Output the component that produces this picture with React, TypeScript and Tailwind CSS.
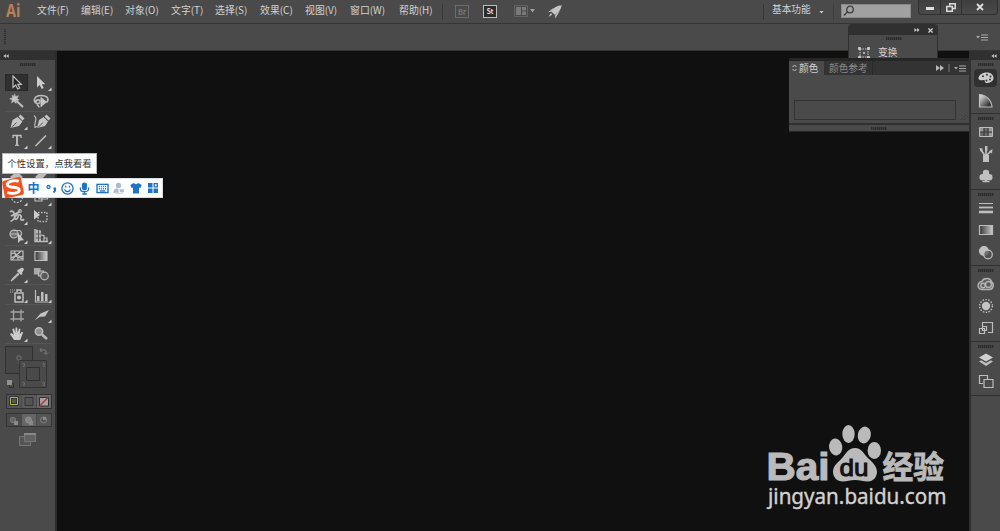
import type { ReactNode } from 'react';

const menus = [
  { label: '文件(F)', width: 'w-[44px]' },
  { label: '编辑(E)', width: 'w-[44px]' },
  { label: '对象(O)', width: 'w-[46px]' },
  { label: '文字(T)', width: 'w-[44px]' },
  { label: '选择(S)', width: 'w-[45px]' },
  { label: '效果(C)', width: 'w-[45px]' },
  { label: '视图(V)', width: 'w-[45px]' },
  { label: '窗口(W)', width: 'w-[49px]' },
  { label: '帮助(H)', width: 'w-[40px]' },
];

interface ToolProps {
  children?: ReactNode;
  more?: boolean;
}

function Tool({ children, more }: ToolProps) {
  return (
    <svg viewBox="0 0 24 19" className="block h-[19px] w-6" fill="none" stroke="#bdbdbd" strokeWidth="1.2">
      {children}
      {more && <path d="M22.5 14.500v3.500H19z" fill="#d0d0d0" stroke="none" />}
    </svg>
  );
}

function Gripper() {
  return (
    <div className="h-[3px] w-4 bg-[repeating-linear-gradient(90deg,#2c2c2c_0px,#2c2c2c_1px,#3c3c3c_1px,#3c3c3c_2px)]" />
  );
}

function DoubleArrow({ left }: { left?: boolean }) {
  return (
    <svg viewBox="0 0 8 6" className={left ? 'h-[4px] w-[6px] rotate-180' : 'h-[6px] w-[8px]'} fill="#b8b8b8">
      <path d="M0 0l4 3-4 3zM4 0l4 3-4 3z" />
    </svg>
  );
}

function PanelMenu({ className }: { className: string }) {
  return (
    <svg viewBox="0 0 12 7" className={`h-[7px] w-3 ${className}`} fill="#a8a8a8">
      <path d="M0 2h4L2 4.5zM5 .5h7v1H5zM5 3h7v1H5zM5 5.5h7v1H5z" />
    </svg>
  );
}

function MenuBar() {
  return (
    <div className="flex h-[23px] shrink-0 items-start">
      <span className="w-[37px] pl-[6px] font-['Open_Sans','Noto_Sans',sans-serif] text-[17.500px] font-bold leading-[20px] text-[#b98058]">
        <span className="inline-block w-[14px] origin-left scale-x-[0.83]">Ai</span>
      </span>
      <div className="flex pt-[2px] text-[9.900px] leading-[17px]">
        {menus.map((menu) => (
          <span key={menu.label} className={`${menu.width} whitespace-nowrap`}>
            {menu.label}
          </span>
        ))}
      </div>
      <div className="ml-[3px] mt-1 h-4 w-px bg-[#383838]" />
      <div className="ml-[12px] mt-[5px] flex h-[13px] w-[14px] items-center justify-center border border-[#6c6c6c] text-[7.500px] text-[#8a8a8a]">
        Br
      </div>
      <div className="ml-[14px] mt-[5px] flex h-[13px] w-[14px] items-center justify-center border border-[#bdbdbd] bg-[#2c2c2c] text-[7px] font-bold text-[#dddddd]">
        St
      </div>
      <svg viewBox="0 0 22 12" className="ml-[17px] mt-[5px] h-3 w-[22px]">
        <path d="M.5.5h13v11H.5z" fill="none" stroke="#646464" />
        <path d="M2 2h5v8H2zM8 2h4v3.5H8zM8 6.5h4V10H8z" fill="#7a7a7a" />
        <path d="M16 4h5l-2.5 3.5z" fill="#a0a0a0" />
      </svg>
      <svg viewBox="0 0 14 14" className="ml-3 mt-[5px] h-[14px] w-[14px]" fill="#c4c4c4">
        <path d="M13.7.2C9.500.5 5.500 2.500 2.700 6l4 3.700c3.600-1.700 6.300-4.700 7-9.500z" />
        <path d="M5.500 2.800L.2 7.200l3-.4zM11.800 6.200l-4.800 7.500.3-4zM2.800 8L.5 12l3.800-2.500z" />
      </svg>
      <div className="ml-[201px] mt-1 h-4 w-px bg-[#383838]" />
      <span className="ml-[8px] w-[47px] pt-[1px] text-[9.700px] leading-[17px]">基本功能</span>
      <svg viewBox="0 0 5 3" className="mt-[11px] h-[2.500px] w-[5px]" fill="#c8c8c8">
        <path d="M0 0h5L2.500 3z" />
      </svg>
      <div className="ml-[9px] mt-1 h-4 w-px bg-[#3e3e3e]" />
      <div className="ml-[7px] mt-[4px] h-[14px] w-[70px] border border-[#898989] bg-[#a1a1a1]">
        <svg viewBox="0 0 12 12" className="ml-[1px] h-3 w-3" fill="none" stroke="#3c3c3c" strokeWidth="1.300">
          <circle cx="7" cy="4.500" r="3.300" />
          <path d="M4.500 7L.8 10.500" />
        </svg>
      </div>
      <div className="ml-[7px] flex h-[15px] w-[80px] divide-x divide-[#303030] rounded-b-sm border border-t-0 border-[#303030] bg-gradient-to-b from-[#3e3e3e] to-[#4a4a4a]">
        <div className="flex w-[22px] items-center justify-center pt-[3px]">
          <div className="h-[3px] w-2 bg-[#dedede]" />
        </div>
        <div className="flex w-[21px] items-center justify-center">
          <svg viewBox="0 0 10 9" className="h-[9px] w-[10px]" fill="none" stroke="#dedede" strokeWidth="1.500">
            <path d="M3.700 2.500V.8h5.500v4.700H6.500M.8 3.500h5.500v4.700H.8z" />
          </svg>
        </div>
        <div className="flex flex-1 items-center justify-center">
          <svg viewBox="0 0 8 8" className="h-2 w-2" stroke="#dedede" strokeWidth="1.800">
            <path d="M1 1l6 6M7 1L1 7" />
          </svg>
        </div>
      </div>
    </div>
  );
}

function Toolbox() {
  return (
    <div className="flex h-full w-[57px] shrink-0 flex-col border-r-2 border-[#2b2b2b] bg-[#4a4a4a]">
      <div className="flex h-[9px] shrink-0 items-center bg-[#303030] pl-[3px]">
        <DoubleArrow left />
      </div>
      <div className="flex h-3 shrink-0 justify-center pt-[3px]">
        <Gripper />
      </div>

      {/* Selection */}
      <div className="ml-[5px] grid w-[47px] grid-cols-[24px_23px] border-b border-[#555555]">
        <div className="h-5 pt-[1px]">
          <Tool>
            <path d="M.5 1.500h22v16H.5z" fill="#303030" stroke="#292929" />
            <path d="M8 3v11.500l2.700-2.500 2 4 2-1-1.900-3.700h3.500z" fill="#252525" />
          </Tool>
        </div>
        <div className="pt-[1px]">
          <Tool more>
            <path d="M8 3v11.500l2.700-2.500 2 4 2-1-1.900-3.700h3.500z" fill="#cccccc" stroke="none" />
          </Tool>
        </div>
        <Tool>
          <path d="M9.500 1.800l1 2.700 3-.8-1.600 2.600 2.200 1.700-3 .4-.1 3.100-2-2.200-2.600 1.600.9-3-2.700-1.200 2.900-.8-.3-2.800 2 1.500z" fill="#c4c4c4" stroke="#c4c4c4" strokeWidth=".5" />
          <path d="M11 8.500l7 6.500" strokeWidth="2.100" />
        </Tool>
        <Tool>
          <path d="M8 11.500C3.500 9.500 5 3.500 12 3.500s8.500 4 5.500 7M7 10c0-2.500 4-3 4-.5s-2.500 2.500-4 1.500M8 12.500c1 1 2 1.500 2 3" strokeWidth="1.600" />
          <path d="M11.500 4.500v11l6.500-5.500z" fill="#c4c4c4" stroke="none" />
        </Tool>
      </div>

      {/* Drawing */}
      <div className="ml-[5px] grid w-[47px] grid-cols-[24px_23px] border-b border-[#555555]">
        <Tool more>
          <path d="M5.500 16l2-8 5-3 5 4.500-3.500 4.500zM13.500 4.500L15.500 2.500l4 4-2 2z" fill="#c4c4c4" stroke="none" />
          <path d="M6.500 15.500l5-5" stroke="#484848" strokeWidth=".9" />
        </Tool>
        <Tool>
          <path d="M8 16l2-8 4.500-3 4.500 4.500-3 4.500zM15.500 4.500l2-2 4 4-2 2z" fill="#c4c4c4" stroke="none" />
          <path d="M5 3.500c5 3-1 8 1 12l2-1" />
          <path d="M9 15.500l5-5" stroke="#484848" strokeWidth=".9" />
        </Tool>
        <Tool more>
          <path d="M8 7V4.500h8V7" strokeWidth="1.300" />
          <path d="M12 4v10" strokeWidth="1.900" />
          <path d="M10 14.300h4" />
        </Tool>
        <Tool more>
          <path d="M6.500 15L17 4.500" strokeWidth="1.600" />
        </Tool>
        <Tool more>
          <circle cx="12" cy="9" r="5" />
        </Tool>
        <Tool more>
          <path d="M7 14L16 4l2 2L9 15z" />
        </Tool>
        <Tool more>
          <path d="M6 8l6-5 5 5-6 6z" fill="#bdbdbd" />
        </Tool>
        <Tool more>
          <path d="M7 8l6-6 5 2-6 6z" fill="#bdbdbd" />
        </Tool>
        <Tool more>
          <circle cx="12" cy="9" r="5.500" strokeDasharray="2 1.300" />
        </Tool>
        <Tool more>
          <path d="M6 6h7v7H6zM10 3h8.500v8H10z" />
        </Tool>
        <Tool more>
          <path d="M5 5c3-3 5 2 4.500 5s3 3 3.500-.5 4-1 3 1.500 2 3 3 1M5.500 14c3 1 5.500-7 9-10M6 9l8-4" strokeWidth="1.700" />
          <circle cx="15" cy="4" r="1.300" />
        </Tool>
        <Tool>
          <path d="M9 5.500h9v9H9z" strokeDasharray="1.500 1.500" strokeWidth="1.500" />
          <path d="M5 3v9.500l6-4.500z" fill="#cccccc" stroke="none" />
        </Tool>
        <Tool more>
          <circle cx="9" cy="8" r="4" fill="#6e6e6e" />
          <path d="M5.500 8h8M8 4.500h6c3 0 3.500 5 0 7" />
          <path d="M13 7v10l2.500-2.500 3.500-.2z" fill="#c8c8c8" stroke="none" />
        </Tool>
        <Tool more>
          <path d="M6 3v12.500h13" strokeWidth="1.500" />
          <path d="M7 3.500l5 1V15H7z" fill="#b4b4b4" stroke="none" />
          <path d="M12 9l3 .5V15M15 12h3v3" />
          <path d="M9.500 4v11M7 8h5M7 12h5" stroke="#4a4a4a" strokeWidth=".8" />
        </Tool>
      </div>

      {/* Colouring */}
      <div className="ml-[5px] grid w-[47px] grid-cols-[24px_23px] border-b border-[#555555]">
        <Tool>
          <path d="M6 5h12v9H6zM6 8c5-4 8 6 12 2M10 5c-2 5 4 4 3 9M16 5c-3 3-6 5-9 9M6 12l4-2 8 3" />
        </Tool>
        <Tool>
          <defs>
            <linearGradient id="toolGradient">
              <stop offset="0" stopColor="#333333" />
              <stop offset="1" stopColor="#d4d4d4" />
            </linearGradient>
          </defs>
          <path d="M6 5.500h12v9H6z" fill="url(#toolGradient)" />
        </Tool>
        <Tool more>
          <path d="M14 4.500l2-1.500c2-1 3.500 1 2.500 2.500L17 7.500l.5 1.500-1.500 1-4-4 1-1.500z" fill="#c8c8c8" stroke="none" />
          <path d="M13.500 8L8 13.500l-2 2.500L8 14.500l6-5.500" />
        </Tool>
        <Tool>
          <path d="M5.500 3.500H11V9H5.500z" fill="#a8a8a8" stroke="#a8a8a8" />
          <path d="M9.500 6h5v5h-5z" fill="#777777" />
          <circle cx="15.500" cy="11" r="3.800" fill="#5a5a5a" />
        </Tool>
      </div>

      {/* Symbols and graphs */}
      <div className="ml-[5px] grid w-[47px] grid-cols-[24px_23px] border-b border-[#555555]">
        <Tool more>
          <path d="M10 8h8v9h-8zM12 7V5h4v2" strokeWidth="1.500" />
          <circle cx="14" cy="12.500" r="1.500" fill="#c8c8c8" />
          <path d="M5 5h6M5 7h4" stroke="#8c8c8c" strokeWidth="1.500" strokeDasharray="1 1" />
        </Tool>
        <Tool more>
          <path d="M6.500 5v12H19" />
          <path d="M8 11h2.500v5H8zM12 7h2.500v9H12zM16 9h2.500v7H16z" fill="#bdbdbd" stroke="none" />
        </Tool>
      </div>

      {/* Artboard and view */}
      <div className="ml-[5px] grid w-[47px] grid-cols-[24px_23px] border-b border-[#555555]">
        <Tool>
          <path d="M8.500 4.500v12M16 4.500v12M5.500 7H19M5.500 14H19" stroke="#a4a4a4" strokeWidth="1.300" />
        </Tool>
        <Tool more>
          <path d="M5.500 15.500l6-7L20 5l-4 6.500-5 .3z" fill="#c4c4c4" stroke="none" />
        </Tool>
        <Tool more>
          <path d="M9 16l-4-6 1.300-1 2.500 2L7.300 5 9 4.500l1.500 4.500V3.500h1.700l.4 5.500L14 4.500l1.400.5-.7 5.500 2-2.800 1.400.8-2.900 7.500z" fill="#cccccc" stroke="none" />
        </Tool>
        <Tool>
          <circle cx="10" cy="7.500" r="3.700" fill="#919191" strokeWidth="1.500" />
          <path d="M13 10.500l5 4.500" strokeWidth="2.500" />
        </Tool>
      </div>

      {/* Fill / stroke, colour mode, drawing mode, screen mode */}
      <svg viewBox="0 0 55 112" className="block h-28 w-[55px] shrink-0" fill="none">
        <path d="M5.500 2.500h27v27h-27z" fill="#464646" stroke="#303030" />
        <circle cx="19" cy="14" r="2.200" stroke="#777777" />
        <path d="M19 17v3" stroke="#4f6475" />
        <path d="M19.500 16.500h27v27h-27z" fill="#4a4a4a" stroke="#343434" />
        <path d="M26.500 23.500h13v13h-13z" stroke="#303030" />
        <g stroke="#7c7c7c">
          <path d="M22.500 20c1-1.500 3 0 1.500 1.200V23M42.500 20c1-1.500 3 0 1.500 1.200V23M22.500 39c1-1.500 3 0 1.500 1.200V42M42.500 39c1-1.500 3 0 1.500 1.200V42" />
          <path d="M40 6h5c1 0 1 1 1 4M41.500 4L40 6l1.500 2M44 8.500l2 2 2-2" />
        </g>
        <path d="M9.500 39.500h4v4h-4z" stroke="#303030" />
        <path d="M7 36h5v5H7z" fill="#919191" />

        <path d="M6.500 50.500h45v14h-45z" stroke="#303030" />
        <path d="M7 51h14v13H7z" fill="#555555" />
        <path d="M10.500 53.500h7v7h-7z" stroke="#2c2c2c" strokeWidth="2.500" />
        <path d="M10.500 53.500h7v7h-7z" stroke="#b5b34d" />
        <path d="M22 51h14v13H22z" fill="#5b5b5b" />
        <path d="M25 53.500h8v8h-8z" fill="#555555" stroke="#333333" />
        <path d="M37 51h14v13H37z" fill="#666666" />
        <path d="M39.500 53.500h9v8.500h-9z" fill="#a3a3a3" stroke="#303030" />
        <path d="M40 61.500l8-8" stroke="#bd3434" strokeWidth="1.500" />

        <path d="M6.500 69.500h45v13h-45z" stroke="#343434" />
        <path d="M22 70h14v12H22z" fill="#656565" />
        <path d="M37 70h14v12H37z" fill="#555555" />
        <circle cx="13" cy="76" r="2.700" fill="#666666" stroke="#7a7a7a" />
        <path d="M14 77h4v4h-4z" fill="#888888" />
        <path d="M29 77h4v4h-4z" fill="#888888" />
        <circle cx="28.500" cy="76" r="3" fill="#858585" stroke="#8d8d8d" />
        <circle cx="43.500" cy="76" r="3" stroke="#818181" />
        <path d="M43 73h3v3h-3z" fill="#888888" />

        <path d="M19.500 92.500h11v9h-11z" fill="#555555" stroke="#777777" />
        <path d="M24.500 89.500h11v8h-11z" fill="#626262" stroke="#777777" />
        <path d="M24 90h12" stroke="#888888" strokeWidth="2" />
      </svg>
    </div>
  );
}

function DockIcon({ children, active }: { children: ReactNode; active?: boolean }) {
  return (
    <div className="flex h-[22px] items-center justify-center">
      <div className={active ? 'flex h-[18px] w-[23px] items-center justify-center rounded-sm bg-[#303030]' : 'flex'}>
        <svg viewBox="0 0 18 18" className="h-[18px] w-[18px]" fill="none" stroke="#bdbdbd" strokeWidth="1.200">
          {children}
        </svg>
      </div>
    </div>
  );
}

function DockGroup({ children }: { children: ReactNode }) {
  return (
    <div className="border-b border-[#303030] pb-[2px]">
      <div className="flex h-[7px] justify-center pt-[3px]">
        <Gripper />
      </div>
      {children}
    </div>
  );
}

function RightDock() {
  return (
    <div className="w-[31px] shrink-0 border-l-2 border-[#303030] bg-[#4a4a4a]">
      <div className="flex h-[9px] items-center justify-end bg-[#303030] pr-[3px]">
        <DoubleArrow left />
      </div>
      <DockGroup>
        <DockIcon active>
          <path d="M9.500 3.500c4 0 7 2 7 5.500s-3.500 5-7 5c-2 0-1-2.500-2.500-3s-5 1.500-5.500-1.500C1.500 6 5.500 3.500 9.500 3.500z" fill="#cccccc" stroke="none" />
          <g fill="#343434" stroke="none">
            <circle cx="6" cy="7.200" r="1" />
            <circle cx="10" cy="5.700" r="1" />
            <circle cx="13.500" cy="7.500" r="1" />
            <circle cx="13" cy="10.500" r="1" />
            <circle cx="9.500" cy="11.500" r="1" />
          </g>
        </DockIcon>
        <DockIcon>
          <defs>
            <linearGradient id="guideGradient" x1="0" y1="0" x2="1" y2="1">
              <stop offset="0" stopColor="#eeeeee" />
              <stop offset=".8" stopColor="#333333" />
            </linearGradient>
          </defs>
          <path d="M2.500 3.500c6 0 12 5.500 12.500 12.500H2.500z" fill="url(#guideGradient)" />
        </DockIcon>
      </DockGroup>
      <DockGroup>
        <DockIcon>
          <path d="M2.500 4.500h13v9h-13z" fill="#6a6a6a" strokeWidth="1" />
          <path d="M3 5h4v4H3zM11 5h4v4h-4zM11 9.500h4V13h-4z" fill="#999999" stroke="none" />
          <path d="M7 5v8M11 5v8M3 9h12" stroke="#393939" />
        </DockIcon>
        <DockIcon>
          <path d="M6 10h6v7H6z" fill="#c0c0c0" stroke="none" />
          <path d="M7.500 10L4 5M9 10V3M10 10l4-4" strokeWidth="1.700" />
          <path d="M2.500 3l3 .5v4L3 5.500zM8 1h2.400v5H8zM12 6.500L15.500 4l-.5 4.500z" fill="#c0c0c0" stroke="none" />
        </DockIcon>
        <DockIcon>
          <g fill="#c0c0c0" stroke="none">
            <circle cx="9" cy="6" r="3.200" />
            <circle cx="5.700" cy="10.300" r="3.200" />
            <circle cx="12.300" cy="10.300" r="3.200" />
            <path d="M8.300 8h1.400l.8 6h2v1.200h-7V14h2z" />
          </g>
        </DockIcon>
      </DockGroup>
      <DockGroup>
        <DockIcon>
          <path d="M2 4.500h14" strokeWidth="1" />
          <path d="M2 8.500h14" strokeWidth="1.800" />
          <path d="M2 13h14" strokeWidth="2.600" />
        </DockIcon>
        <DockIcon>
          <defs>
            <linearGradient id="dockGradient">
              <stop offset="0" stopColor="#333333" />
              <stop offset="1" stopColor="#cccccc" />
            </linearGradient>
          </defs>
          <path d="M2.500 4.500h13v9h-13z" fill="url(#dockGradient)" />
        </DockIcon>
        <DockIcon>
          <circle cx="7" cy="8" r="4.500" fill="#c0c0c0" />
          <circle cx="11" cy="11.500" r="4.300" fill="#555555" fillOpacity=".75" />
        </DockIcon>
      </DockGroup>
      <DockGroup>
        <DockIcon>
          <path d="M5.500 14.500a4 4 0 0 1-.7-8C6.500 2.500 13.500 2.300 14.500 7c2.800 1.300 2.300 7.500-2.500 7.500z" fill="#5c5c5c" stroke="#b4b4b4" strokeWidth="1.500" />
          <circle cx="6" cy="10.500" r="2.200" stroke="#b4b4b4" strokeWidth="1.400" />
          <circle cx="11.500" cy="9.500" r="3" stroke="#b4b4b4" strokeWidth="1.400" />
        </DockIcon>
        <DockIcon>
          <circle cx="9" cy="9" r="4.200" fill="#c4c4c4" stroke="none" />
          <circle cx="9" cy="9" r="6.400" strokeDasharray="1.500 1.370" strokeWidth="1.400" />
        </DockIcon>
        <DockIcon>
          <path d="M5.500 7V3.500h10v10H11" />
          <path d="M2.500 9.500h5v5h-5zM5.500 7.500h4v4h-4z" />
        </DockIcon>
      </DockGroup>
      <DockGroup>
        <DockIcon>
          <path d="M9 2.500l7 4-7 4-7-4z" fill="#d0d0d0" stroke="none" />
          <path d="M2 10.500l2.200-1.200L9 12l4.800-2.700 2.200 1.200-7 4.500z" fill="#bdbdbd" stroke="none" />
        </DockIcon>
        <DockIcon>
          <path d="M6 10.500H2.500v-8h8V6M7 6.500h9v8H7z" />
        </DockIcon>
      </DockGroup>
    </div>
  );
}

function TransformPanel() {
  return (
    <div className="absolute left-[848px] top-[24px] h-[34px] w-[90px] overflow-hidden rounded-t-sm border border-b-0 border-[#303030] bg-[#4a4a4a]">
      <div className="flex h-[10px] items-center justify-end gap-2 bg-[#303030] pr-[4px]">
        <svg viewBox="0 0 8 6" className="h-1 w-[6px]" fill="#c0c0c0">
          <path d="M0 0l4 3-4 3zM4 0l4 3-4 3z" />
        </svg>
        <svg viewBox="0 0 6 6" className="h-[5px] w-[5px]" stroke="#cccccc" strokeWidth="1.500">
          <path d="M.5.500l5 5M5.500.500l-5 5" />
        </svg>
      </div>
      <div className="flex h-[7px] justify-center pl-[1px] pt-[2px]">
        <Gripper />
      </div>
      <div className="flex items-start pl-[9px]">
        <svg viewBox="0 0 12 12" className="mt-[5px] h-3 w-3" fill="none" stroke="#c4c4c4">
          <path d="M2 2h8v8H2z" strokeDasharray="1.500 1" />
          <path d="M.5.5h2v2h-2zM9.500.5h2v2h-2zM.5 9.500h2v2h-2zM9.500 9.500h2v2h-2zM5.500 5.500h1v1h-1z" fill="#c4c4c4" />
        </svg>
        <span className="pl-2 pt-[3px] text-[9.700px] leading-[15px]">变换</span>
      </div>
    </div>
  );
}

function ColorPanel() {
  return (
    <div className="absolute left-[789px] top-[58px] flex h-[74px] w-[180px] flex-col border-b border-t-[3px] border-[#262626] bg-[#4a4a4a]">
      <div className="flex h-[14px] items-center bg-[#333333] leading-[14px]">
        <div className="flex h-full w-[35px] items-center gap-[2px] bg-[#4a4a4a] pl-[3px]">
          <svg viewBox="0 0 5 8" className="h-2 w-[5px]" fill="none" stroke="#c4c4c4">
            <path d="M.5 3l2-2 2 2M.5 5l2 2 2-2" />
          </svg>
          <span className="whitespace-nowrap text-[9.700px]">颜色</span>
        </div>
        <div className="flex h-full w-[49px] items-center whitespace-nowrap border-r border-[#292929] pl-[5px] text-[9.700px] text-[#8c8c8c]">
          颜色参考
        </div>
        <div className="flex flex-1 items-center justify-end pr-[3px]">
          <DoubleArrow />
          <div className="ml-1 h-2 w-[2px] bg-[#555555]" />
          <PanelMenu className="ml-1" />
        </div>
      </div>
      <div className="flex h-[50px] items-end border-b-2 border-[#303030] pb-[3px] pl-[5px]">
        <div className="h-5 w-[162px] border border-[#333333]" />
        <svg viewBox="0 0 8 8" className="ml-1 h-2 w-2" stroke="#303030" strokeDasharray="1 1">
          <path d="M1 8l7-7M4 8l4-4" />
        </svg>
      </div>
      <div className="flex flex-1 items-center justify-center">
        <Gripper />
      </div>
    </div>
  );
}

function ImeBar() {
  return (
    <div className="absolute left-[2px] top-[178px] flex h-5 w-[161px] items-center border border-[#d8dce3] bg-white">
      <svg viewBox="0 0 24 24" className="-ml-px h-6 w-[23px] shrink-0 overflow-visible">
        <path d="M2 4.500L17 .5c1.500-.3 2.500.2 2.800 1.700l3 14c.2 1.500-.5 2.500-2 3L6 22.500c-1.500.4-3-.3-3.200-1.700L.3 7C0 5.500.700 4.800 2 4.500z" fill="#f4511e" />
        <path d="M17.500 5c-4-1.500-12 0-12 3.500 0 4 12.500 1.500 12.500 5.500 0 3.500-8 4.500-12.500 2.500" fill="none" stroke="#ffffff" strokeWidth="3" />
      </svg>
      <div className="grid w-[139px] grid-cols-8 items-center justify-items-center text-[#1d73c8]">
        <span className="text-[12px] font-bold leading-[18px]">中</span>
        <svg viewBox="0 0 12 12" className="h-3 w-3" fill="none" stroke="currentColor" strokeWidth="1.300">
          <circle cx="3.500" cy="5" r="1.500" />
          <path d="M8.500 6.500h1.600c.3 1.700-.2 3-1.600 4" strokeWidth="2" />
        </svg>
        <svg viewBox="0 0 14 14" className="h-[13px] w-[13px]" fill="none" stroke="currentColor" strokeWidth="1.400">
          <circle cx="7" cy="7" r="6" />
          <path d="M3.800 8c1 3.200 5.400 3.200 6.400 0M5 4v2M9 4v2" />
        </svg>
        <svg viewBox="0 0 12 14" className="h-[13px] w-[11px]" fill="currentColor">
          <rect x="3.200" y=".5" width="5.600" height="8.500" rx="2.800" />
          <path d="M1.500 6v1.500c0 4 9 4 9 0V6M6 10.500V13M3.500 13h5" fill="none" stroke="currentColor" strokeWidth="1.400" />
        </svg>
        <svg viewBox="0 0 14 12" className="h-[11px] w-[13px]" fill="none" stroke="currentColor" strokeWidth="1.500">
          <rect x="1" y="1.500" width="12" height="9" />
          <path d="M3 4h8M3 6.300h8" strokeDasharray="1.200 1" />
          <path d="M4 8.700h6" />
        </svg>
        <svg viewBox="0 0 12 12" className="h-3 w-3" fill="#adbcd2">
          <circle cx="5.500" cy="3.500" r="2.700" />
          <path d="M.5 11c0-5 3-5 5-4v4z" />
          <path d="M6.500 7h4.700v2c0 2.500-4.700 2.500-4.700 0zM2 11h8v1H2z" stroke="#ffffff" strokeWidth=".5" />
        </svg>
        <svg viewBox="0 0 12 12" className="h-3 w-3" fill="currentColor">
          <path d="M3.800 1c1 1.500 3.400 1.500 4.400 0l3.500 2-1.200 3-1.500-.5V11.500H3V5.500L1.500 6 .3 3z" />
        </svg>
        <svg viewBox="0 0 12 12" className="h-3 w-3" fill="currentColor">
          <path d="M1 1h4.500v4.500H1zM1 6.500h4.500V11H1zM6.500 6.500H11V11H6.500z" />
          <path d="M7.200 1.700h3.100v3.100H7.200z" fill="none" stroke="currentColor" strokeWidth="1.300" />
        </svg>
      </div>
    </div>
  );
}

function Watermark() {
  return (
    <svg viewBox="0 0 190 90" className="absolute left-[762px] top-[422px] h-[90px] w-[190px] overflow-visible" fill="#bababa">
      <text x="4.500" y="57.500" className="font-['Liberation_Sans',sans-serif] text-[39.500px] font-bold" textLength="63" lengthAdjust="spacingAndGlyphs" stroke="#bababa" strokeWidth="1.200">
        Bai
      </text>
      <ellipse cx="73.700" cy="25" rx="6.600" ry="8.500" transform="rotate(-8 73.700 25)" />
      <ellipse cx="86.500" cy="12" rx="6.200" ry="9" />
      <ellipse cx="102.300" cy="13" rx="6.500" ry="8.500" transform="rotate(12 102.300 13)" />
      <ellipse cx="112.300" cy="28.500" rx="6.700" ry="8.500" />
      <path d="M93 26c6 0 8 4.500 11.500 8.500 4 4.500 10.500 8.500 10.500 15.500 0 5-4 9.500-9 9.500-4.500 0-8-1.500-13-1.500s-8 1.500-12 1.500c-6 0-10-4-10-10 0-6.500 6-9.500 10-14.500 3.500-4.500 6-9 12-9z" />
      <text x="77.500" y="53.500" className="font-['Liberation_Sans',sans-serif] text-[24.500px]" textLength="29" lengthAdjust="spacingAndGlyphs" fill="#111111" stroke="#111111" strokeWidth="1">
        du
      </text>
      <text x="120.500" y="55.500" className="font-['Noto_Sans_CJK_SC',sans-serif] text-[31px] font-bold" textLength="61.500" lengthAdjust="spacingAndGlyphs" stroke="#bababa" strokeWidth=".8">
        经验
      </text>
      <text x="6" y="81.500" className="font-['Noto_Sans','Open_Sans',sans-serif] text-[21.500px]" textLength="178.500" lengthAdjust="spacingAndGlyphs" fill="#d2d2d2" stroke="#d2d2d2" strokeWidth=".4">
        jingyan.baidu.com
      </text>
    </svg>
  );
}

export default function App() {
  return (
    <div className="relative flex h-[531px] w-[1000px] flex-col overflow-hidden bg-[#4a4a4a] font-['Noto_Sans_CJK_SC',sans-serif] text-[#d2d2d2]">
      <MenuBar />
      <div className="flex h-[28px] shrink-0 items-start justify-between border-y border-[#353535] pl-1 pr-[12px]">
        <div className="mt-[5px] h-4 w-[2px] bg-[repeating-linear-gradient(180deg,#303030_0px,#303030_1px,#424242_1px,#424242_2px)]" />
        <PanelMenu className="mt-[10px]" />
      </div>
      <div className="flex min-h-0 flex-1">
        <Toolbox />
        <div className="flex-1 bg-[#101010]" />
        <RightDock />
      </div>

      <TransformPanel />
      <ColorPanel />
      <ImeBar />
      <div className="absolute left-[2px] top-[153px] flex h-[21px] w-[95px] items-center justify-center whitespace-nowrap border border-[#b8b8b8] bg-white text-[9.400px] text-[#333333]">
        个性设置，点我看看
      </div>
      <Watermark />
    </div>
  );
}
